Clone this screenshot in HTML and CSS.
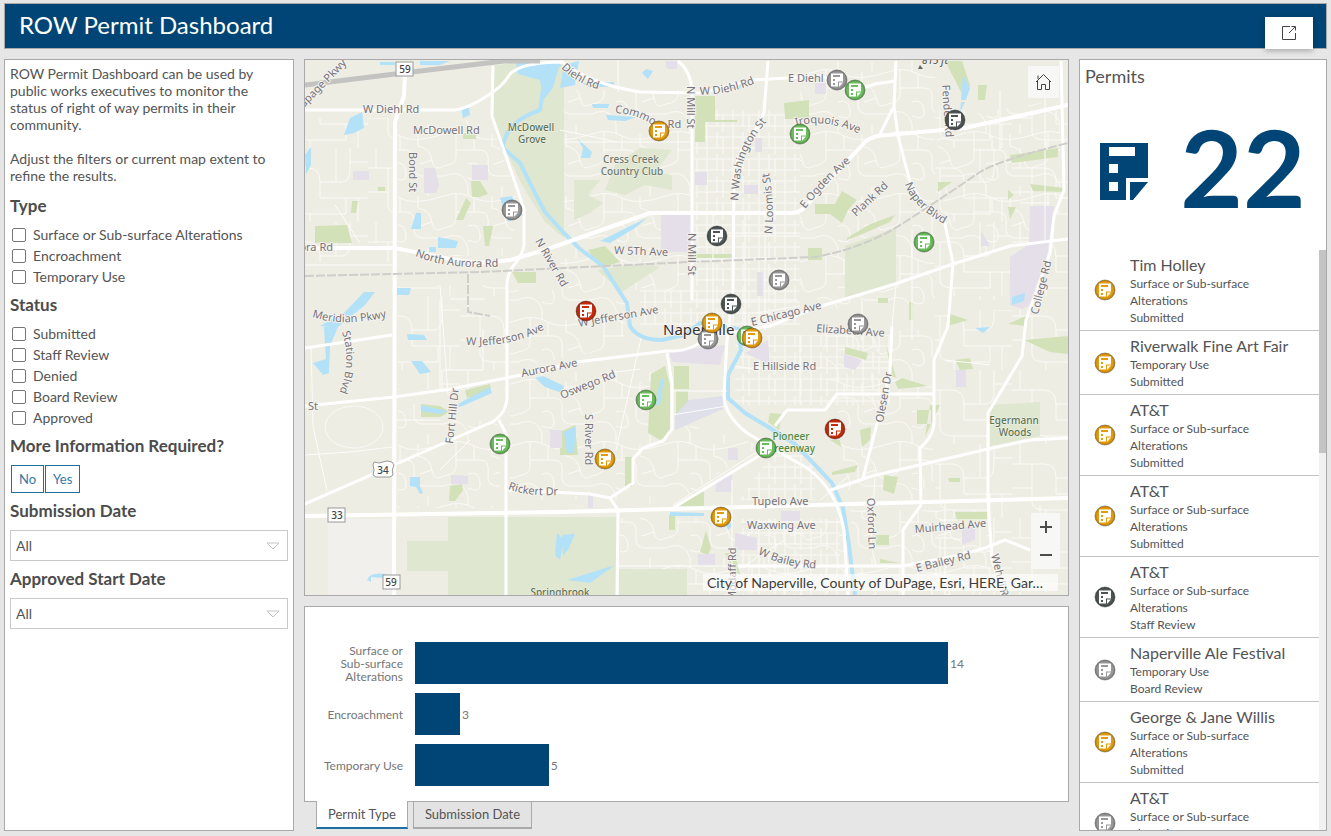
FILE: index.html
```html
<!DOCTYPE html>
<html lang="en">
<head>
<meta charset="utf-8">
<title>ROW Permit Dashboard</title>
<link rel="stylesheet" href="styles.css">
</head>
<body>
<svg class="defs" aria-hidden="true">
  <symbol id="form" viewBox="0 0 48 57"><path fill-rule="evenodd" d="M0 0H48V35H26V57H0ZM9 4V13H35V4ZM9 21V30H18V21ZM9 39V48H18V39ZM30 39H48L33 57H30Z"/></symbol>
  <symbol id="pin" viewBox="-11 -11 22 22"><circle r="10" fill="currentColor" stroke="#000" stroke-opacity=".25"/><circle r="9.500" fill="none" stroke="#000" stroke-opacity=".12" stroke-width="2"/><path fill="#fff" fill-rule="evenodd" d="M-6-6.500H6V1.500H1V6.500H-6ZM-4-5V-3H3V-5ZM-4-1V1H-2V-1ZM-4 3V5H-2V3ZM2 2.500H6L2.500 6.500H2Z"/></symbol>
</svg>

<header class="topbar">
  <h1>ROW Permit Dashboard</h1>
  <button class="open" aria-label="Open in new window"><svg width="16" height="16" viewBox="0 0 16 16"><path d="M9 1.500H1.500V14.500H14.500V8M8 8L14 2M10.500 1.500H14.500V5.500"/></svg></button>
</header>

<main class="board">
  <aside class="panel filters">
    <p>ROW Permit Dashboard can be used by public works executives to monitor the status of right of way permits in their community.</p>
    <p>Adjust the filters or current map extent to refine the results.</p>
    <fieldset><legend>Type</legend>
      <label><input type="checkbox">Surface or Sub-surface Alterations</label>
      <label><input type="checkbox">Encroachment</label>
      <label><input type="checkbox">Temporary Use</label>
    </fieldset>
    <fieldset><legend>Status</legend>
      <label><input type="checkbox">Submitted</label>
      <label><input type="checkbox">Staff Review</label>
      <label><input type="checkbox">Denied</label>
      <label><input type="checkbox">Board Review</label>
      <label><input type="checkbox">Approved</label>
    </fieldset>
    <h2>More Information Required?</h2>
    <div class="choices"><button>No</button><button>Yes</button></div>
    <h2><label for="submitted">Submission Date</label></h2>
    <div class="select"><select id="submitted"><option>All</option></select><svg width="14" height="8" viewBox="0 0 14 8"><path d="M1 1H13L7 7Z"/></svg></div>
    <h2><label for="started">Approved Start Date</label></h2>
    <div class="select"><select id="started"><option>All</option></select><svg width="14" height="8" viewBox="0 0 14 8"><path d="M1 1H13L7 7Z"/></svg></div>
  </aside>

  <section class="middle">
    <div class="panel map">
      <svg class="canvas" viewBox="305 60 763 535" preserveAspectRatio="xMidYMid slice" role="img" aria-label="Map of permits in Naperville">
        <defs>
          <pattern id="winding" width="74" height="62" patternUnits="userSpaceOnUse"><path class="lane" d="M0 10Q16 4 30 12T74 10M12 7V32Q13 40 0 42M12 26H36Q46 26 44 40T58 52H74M30 12V26M48 10V22Q60 24 62 36T74 42M0 52Q18 44 24 62M24 40Q34 36 36 48T24 54M58 0V10M24 0V10M62 36L50 40"/></pattern>
          <pattern id="blocks" width="26" height="22" patternUnits="userSpaceOnUse"><path class="lane" d="M0 5H26M0 16H26M5 0V22M15 0V16M21 5V22"/></pattern>
          <pattern id="suburb" width="92" height="74" patternUnits="userSpaceOnUse"><path class="lane" d="M0 20H32Q44 20 44 34V50H92M20 20V58Q20 66 34 66H70V50M44 34H66Q74 34 74 20V0M60 0V34M0 44H20M82 50V74M34 66V74M8 0V20M74 14H92"/></pattern>
        </defs>
        <rect x="305" y="60" width="763" height="535" fill="#eeede3"/>
        <path fill="#f1f0ed" d="M328 519H393V595H328Z"/>
        <path fill="url(#suburb)" d="M305 118H393V262H305ZM398 285H506V390H398ZM935 110H1068V300H935ZM935 310H1068V595H935Z"/>
        <path fill="url(#winding)" d="M398 120H490L522 210 505 256H398ZM564 90H690V290H560ZM510 290H625V345L510 370ZM398 400L500 425V508H398ZM510 370H666V500H510ZM672 420L760 445 680 500 640 506V470ZM620 518H735V595H620ZM800 61H935V310H840L800 290ZM737 519H845V595H737ZM820 330H933V500H850ZM850 510H990V595H860ZM935 120L1060 100V240L950 260Z"/>
        <path fill="url(#blocks)" d="M695 110H800V325H640V290H695ZM735 335H890V405H735ZM770 455H815V500H740ZM740 519H840V595H740Z"/>
        <ellipse cx="354" cy="427" rx="29" ry="21" class="lane"/>

        <g fill="#dfe7d0">
          <path d="M494 66L520 61H564V238L545 222 522 185 503 145 493 118Z"/>
          <path d="M448 517H617V595H448ZM407 541H448V571H407ZM619 569H687V595H619Z"/>
          <path d="M845 246L896 228V284L845 299ZM990 405L1040 402V436L990 446Z"/>
          <path d="M574 180H600L588 195 603 203 590 213 574 220ZM615 165L640 148 672 150 655 172 672 175V190L645 185 625 195 605 190Z"/>
          <path d="M597 270L645 263 660 267 622 292Z"/>
        </g>
        <g fill="#d3e1b9">
          <path d="M315 226L347 225 352 243H315ZM352 201H358L356 213H351ZM471 181H480L488 194 480 197H472ZM466 198L471 203 463 220H456ZM483 226H493L489 246H485ZM512 272H536V283H518ZM378 187H385V191H378ZM463 133H476V139H463Z"/>
          <path d="M695 96H715V120H737V122H705V142H695ZM784 103L809 100V119H785ZM945 61H962L970 85 965 100 955 80ZM978 85H987L985 100H978ZM938 182H952L938 192ZM1010 155L1058 148V157L1012 163ZM1030 184L1064 188V192L1033 191ZM1008 190L1014 195 1008 200ZM1008 207H1016L1010 219ZM815 204H835L842 191 857 200 848 210 842 223 830 214H815ZM847 238L870 224 895 215 890 222 860 235 847 240Z"/>
          <path d="M651 374L665 366 670 385V435L660 440 648 433ZM674 366H689V389H674ZM676 391H688V413L676 418ZM625 457H632V487H625ZM695 492H704V506H680ZM560 432L575 425 578 455H560ZM421 404L440 406 450 412 440 417H421ZM465 390L490 384 491 393 467 398ZM450 486L462 484 463 490 455 501H449ZM669 515H675V530H669Z"/>
          <path d="M700 552L706 530 711 548 708 555ZM770 413L782 414 779 430 768 422ZM845 347L868 353 866 360 845 354ZM925 437L940 405 930 405ZM895 382L902 378 928 386 898 389ZM917 410H931V424H917ZM886 344L892 377H896ZM860 430L871 427 870 440 862 447ZM832 472L858 465 855 472 832 475ZM884 475L898 477 894 494 883 490ZM955 360L970 358 973 369 960 370ZM955 512H987V521H957ZM876 535H889V545H876ZM880 559L900 563H880ZM1024 340L1068 336V354L1050 352ZM948 478H960V482H949ZM725 553H735L740 575 733 570ZM830 440H840L841 447ZM808 248H822V260H808ZM878 298H888V303H878ZM909 302H913V320H909ZM950 314L968 320 948 326ZM1008 324L1026 316V326ZM694 254H732V258H694ZM588 250L605 246 620 262 600 268Z"/>
        </g>
        <g fill="#e5dfe9">
          <path d="M424 168H435L439 185 436 193H424ZM353 171H369V180H353ZM472 165H488V180H472ZM451 475L468 476V484H451Z"/>
          <path d="M661 215H692V252H661ZM695 172H707V185H695ZM744 185H758V194H744ZM665 61H677V69H667ZM755 138H762V152H755ZM757 272H763V296H757ZM669 351L725 345 720 365 672 362ZM717 480L732 474V492H715ZM728 448H738V460H728ZM735 533L757 538V550H735ZM781 511H800V521H781ZM698 554H715V565H698ZM1030 206H1054L1048 250 1040 300 1022 309 1010 305V257L1029 244ZM981 230L990 246H981ZM956 370H966V387H956ZM844 354L862 360 855 370 844 367ZM962 527H975V540L962 545ZM550 430H562V448H550ZM588 495H593V508H588ZM768 340L770 365 745 353ZM815 83H826V94H815Z"/>
        </g>
        <path fill="#dedfe9" d="M689 400L723 396V409L675 430V415Z"/>

        <g fill="#b3e1f8">
          <path d="M350 118L362 112 364 128 354 133 344 135ZM461 108L469 108 470 115 463 118ZM380 62H395V65H380ZM420 61H450L440 65H420ZM305 155L311 147V165L306 174ZM416 213H421V229H411ZM438 237L458 241 456 248H438ZM429 247H436V252H429ZM364 292L375 292 365 305 350 317 337 328 320 326 345 312ZM397 288H411L409 295H397ZM324 327H338L330 346 329 373 323 375 313 363 326 359ZM407 334L424 335 427 340H408ZM411 361L422 361 431 372 420 374ZM421 405L447 411 465 400 490 387 492 393 465 405 440 414 421 411ZM410 477L420 477V486L423 493 420 494 416 487 410 486ZM367 580Q370 572 386 574L383 578 371 577V582Z"/>
          <path d="M516 63H560L553 88 543 100 540 80 518 74ZM564 65L579 61 575 85 560 88ZM582 83L614 82V86L590 88ZM592 104L609 104 608 108 593 108ZM606 115L637 117 625 121 608 120ZM642 73L646 69 653 71 648 79ZM577 138L592 152 590 158 581 158 583 148ZM600 241L628 227 647 218 635 228 610 243ZM500 198L512 196 516 206 523 215 508 222Z"/>
          <path d="M963 75L970 88 966 100H961ZM961 102L965 102 960 112ZM1012 297L1025 293 1024 301 1012 305ZM535 378L543 376 564 386 562 393 545 387ZM660 380L664 378 660 405H656ZM564 432L576 426 574 453H567ZM670 512L704 513V516H670ZM728 530L732 526 729 520 725 523ZM557 533L564 540 560 560 555 555ZM562 535L575 534 568 550 563 556ZM567 580L615 565 590 583ZM725 85H742L740 89H725ZM975 328L990 327 983 333Z"/>
        </g>
        <path class="river" d="M560 64L545 76 540 110Q505 122 503 148L520 163 536 195 545 212 564 233 580 249 603 266 627 303 630 326Q638 340 662 340L684 335 700 323 738 329 741 350 728 375V398L745 413 770 428 795 444 816 466 832 483 843 508 849 545 855 595"/>

        <g class="minor">
          <path d="M311 346L313 426 327 491M305 455L350 452 392 447M440 470L470 440M564 142H690M618 60V92M560 130L617 142M440 300V390M440 285L448 395M450 299H485M483 329V370H443M394 420H440M641 338L616 450M672 391H727M672 415L727 406M600 374L640 369M732 480V595M673 505L760 450M619 566H745L760 555 785 540M735 366L760 370M755 313L800 306M800 335V404M862 300V340M896 285L892 326M940 520H990M1040 505V540M912 230V340M1000 90V150M1045 75V240M945 360L990 365M1020 203H1050M875 478L871 545 876 566M820 500L850 475M945 500V595M305 265H394M335 205L360 243M692 300H798M692 233H800M713 213V330M745 213V330M765 213V330M692 260H800"/>
        </g>
        <g class="major">
          <path d="M305 110H455Q470 108 490 94Q503 86 510 74Q522 62 562 62Q590 84 640 92L700 93 753 80 822 76 850 92 875 84 895 81"/>
          <path d="M493 66L492 116 507 159 524 209V245Q522 256 514 265T507 290V398Q506 414 492 422L305 504M499 420L506 434V595"/>
          <path d="M678 61Q690 70 692 90V300M768 61L764 112Q760 125 748 140Q736 155 734 180L733 290 727 340 724 395Q724 415 747 433L793 460Q835 480 844 530L848 595"/>
          <path d="M896 61L894 106 898 136 910 182 925 208 945 224 953 263 948 326 934 360V425Q932 438 920 448L921 505 903 530V595M893 108L880 134"/>
          <path d="M1061 61L1064 190 1054 216 1050 253 1026 320 1022 356 988 413V500L992 560 1002 595"/>
          <path d="M707 337L770 326 815 308 895 284 953 264 1010 246 1068 239"/>
          <path d="M305 348L392 335M305 406L394 397 451 389 521 375 577 362 667 351Q695 352 707 335"/>
          <path d="M667 353L672 383V429L663 441 643 448 633 459V483L610 498 590 494 508 490M610 498L618 510 617 595M673 508L767 451M775 426L787 410H825L837 394H933"/>
          <path d="M828 491L872 476 988 449 1030 440 1068 438M892 326L890 373 863 478M738 566H903M903 566L960 555 985 548 1005 540 1030 550"/>
        </g>
        <path class="arterial" d="M405 70L404 96 395 122 394 595M305 248H395L440 257Q480 266 510 260L545 250 650 213H790Q800 213 806 206L852 156 865 142Q873 135 888 135L965 128 1068 105M305 516L560 512 815 505 1068 498"/>
        <path class="rail" d="M305 276L480 272 564 268 690 262 815 257Q865 248 905 222T980 172Q1000 160 1068 143M468 274V312L490 316"/>
        <path class="highway" d="M305 85L395 74 504 61H540"/>

        <defs>
          <path id="t1" d="M415 256Q452 271 506 266"/><path id="t2" d="M312 317Q345 328 390 316"/>
          <path id="t3" d="M561 68Q578 85 602 90"/><path id="t4" d="M700 95Q735 94 762 80"/>
          <path id="t5" d="M615 113Q638 114 657 128H700"/><path id="t6" d="M738 201L741 170Q748 140 772 116"/>
          <path id="t7" d="M772 234Q775 205 768 165"/><path id="t8" d="M805 209Q830 178 860 154"/>
          <path id="t9" d="M796 126Q828 117 866 137"/><path id="t10" d="M905 184Q912 208 950 227"/>
          <path id="t11" d="M342 332Q353 365 336 400"/><path id="t12" d="M466 345Q515 348 552 325"/>
          <path id="t13" d="M508 489Q530 498 570 494"/><path id="t14" d="M758 554Q785 568 826 569"/>
        </defs>
        <g class="streets">
          <text x="363" y="113">W Diehl Rd</text><text x="413" y="134">McDowell Rd</text><text x="333" y="251" text-anchor="end">Aurora Rd</text>
          <text transform="translate(298 114) rotate(-46)">Dupage Pkwy</text>
          <text transform="translate(409 152) rotate(90)">Bond St</text><text transform="translate(535 241) rotate(60)">N River Rd</text>
          <text><textPath href="#t1">North Aurora Rd</textPath></text><text><textPath href="#t2">Meridian Pkwy</textPath></text>
          <text><textPath href="#t3">Diehl Rd</textPath></text><text><textPath href="#t4">W Diehl Rd</textPath></text>
          <text><textPath href="#t5">Commons Rd</textPath></text><text><textPath href="#t6">N Washington St</textPath></text>
          <text><textPath href="#t7">N Loomis St</textPath></text><text><textPath href="#t8">E Ogden Ave</textPath></text>
          <text><textPath href="#t9">Iroquois Ave</textPath></text><text><textPath href="#t10">Naper Blvd</textPath></text>
          <text><textPath href="#t11">Station Blvd</textPath></text><text><textPath href="#t12">W Jefferson Ave</textPath></text>
          <text><textPath href="#t13">Rickert Dr</textPath></text><text><textPath href="#t14">W Bailey Rd</textPath></text>
          <text transform="translate(687 86) rotate(90)">N Mill St</text><text transform="translate(688 233) rotate(90)">N Mill St</text>
          <text transform="translate(614 254) rotate(2)">W 5Th Ave</text><text transform="translate(856 217) rotate(-43)">Plank Rd</text>
          <text x="788" y="82">E Diehl</text><text transform="translate(942 85) rotate(86)">Fender Rd</text>
          <text transform="translate(752 326) rotate(-14)">E Chicago Ave</text><text transform="translate(816 332) rotate(4)">Elizabeth Ave</text>
          <text transform="translate(1038 315) rotate(-76)">College Rd</text><text transform="translate(579 327) rotate(-10)">W Jefferson Ave</text>
          <text transform="translate(453 444) rotate(-84)">Fort Hill Dr</text><text transform="translate(522 377) rotate(-11)">Aurora Ave</text>
          <text transform="translate(562 399) rotate(-22)">Oswego Rd</text><text transform="translate(585 414) rotate(90)">S River Rd</text>
          <text x="308" y="410">St</text><text x="752" y="505">Tupelo Ave</text><text x="747" y="529">Waxwing Ave</text>
          <text x="753" y="370">E Hillside Rd</text><text transform="translate(736 601) rotate(-90)">Modaff Rd</text>
          <text transform="translate(883 423) rotate(-80)">Olesen Dr</text><text transform="translate(867 498) rotate(88)">Oxford Ln</text>
          <text transform="translate(915 533) rotate(-5)">Muirhead Ave</text><text transform="translate(917 572) rotate(-14)">E Bailey Rd</text>
          <text transform="translate(991 555) rotate(76)">Wehrli Rd</text>
        </g>
        <g class="places" text-anchor="middle">
          <text x="531" y="131">McDowell</text><text x="532" y="143">Grove</text>
          <text x="631" y="163" class="club">Cress Creek</text><text x="632" y="175" class="club">Country Club</text>
          <text x="1014" y="424">Egermann</text><text x="1015" y="436">Woods</text><text x="560" y="596">Springbrook</text>
          <text x="791" y="440" class="greenway">Pioneer</text><text x="791" y="452" class="greenway">Greenway</text>
          <text x="935" y="64" class="peak">815 ft</text>
        </g>
        <path fill="#666" d="M918 69L920 65 923 69Z"/>
        <text class="city" x="663" y="335">Naperville</text>
        <g class="shields">
          <rect x="396" y="62" width="17" height="14"/><text x="405" y="73">59</text>
          <rect x="328" y="508" width="17" height="14"/><text x="337" y="519">33</text>
          <rect x="383" y="575" width="17" height="14"/><text x="391" y="586">59</text>
          <path d="M374 462Q379 464 383 462T392 462L394 465Q391 470 393 475L390 477H376L373 475Q375 470 373 465Z"/><text x="383" y="474">34</text>
        </g>
        <g class="submitted">
          <use href="#pin" x="648" y="120" width="22" height="22"/><use href="#pin" x="594" y="448" width="22" height="22"/><use href="#pin" x="710" y="506" width="22" height="22"/>
        </g>
        <g class="review">
          <use href="#pin" x="826" y="69" width="22" height="22"/><use href="#pin" x="501" y="199" width="22" height="22"/><use href="#pin" x="768" y="269" width="22" height="22"/><use href="#pin" x="697" y="328" width="22" height="22"/><use href="#pin" x="847" y="313" width="22" height="22"/>
        </g>
        <g class="approved">
          <use href="#pin" x="844" y="79" width="22" height="22"/><use href="#pin" x="789" y="123" width="22" height="22"/><use href="#pin" x="913" y="231" width="22" height="22"/><use href="#pin" x="736" y="325" width="22" height="22"/><use href="#pin" x="635" y="389" width="22" height="22"/><use href="#pin" x="489" y="433" width="22" height="22"/><use href="#pin" x="755" y="437" width="22" height="22"/>
        </g>
        <g class="staff">
          <use href="#pin" x="944" y="109" width="22" height="22"/><use href="#pin" x="706" y="225" width="22" height="22"/><use href="#pin" x="720" y="293" width="22" height="22"/>
        </g>
        <g class="denied"><use href="#pin" x="575" y="300" width="22" height="22"/><use href="#pin" x="824" y="418" width="22" height="22"/></g>
        <g class="submitted"><use href="#pin" x="701" y="312" width="22" height="22"/><use href="#pin" x="741" y="327" width="22" height="22"/></g>
      </svg>
      <button class="home" aria-label="Default extent"><svg width="17" height="18" viewBox="0 0 17 18"><path d="M1 9L8.500 1.500 16 9M3 2.500V6M2.500 8V16.500H6.500V11.500H10.500V16.500H14.500V8"/></svg></button>
      <div class="zoom"><button aria-label="Zoom in"><svg width="12" height="12" viewBox="0 0 12 12"><path d="M0 6H12M6 0V12"/></svg></button><button aria-label="Zoom out"><svg width="12" height="12" viewBox="0 0 12 12"><path d="M0 6H12"/></svg></button></div>
      <p class="credit">City of Naperville, County of DuPage, Esri, HERE, Gar…</p>
    </div>

    <div class="charts">
      <div class="panel chart">
        <span class="name">Surface or<br>Sub-surface<br>Alterations</span><div class="track"><i style="width:82.900%"></i>14</div>
        <span class="name">Encroachment</span><div class="track"><i style="width:7%"></i>3</div>
        <span class="name">Temporary Use</span><div class="track"><i style="width:20.800%"></i>5</div>
      </div>
      <div class="tabs" role="tablist"><button role="tab" aria-selected="true">Permit Type</button><button role="tab" aria-selected="false">Submission Date</button></div>
    </div>
  </section>

  <aside class="panel permits">
    <h2>Permits</h2>
    <div class="total"><svg width="48" height="57"><use href="#form"/></svg><strong>22</strong></div>
    <div class="list">
      <ul>
        <li><svg class="submitted"><use href="#pin"/></svg><div><h3>Tim Holley</h3><p>Surface or Sub-surface Alterations</p><p>Submitted</p></div></li>
        <li><svg class="submitted"><use href="#pin"/></svg><div><h3>Riverwalk Fine Art Fair</h3><p>Temporary Use</p><p>Submitted</p></div></li>
        <li><svg class="submitted"><use href="#pin"/></svg><div><h3>AT&amp;T</h3><p>Surface or Sub-surface Alterations</p><p>Submitted</p></div></li>
        <li><svg class="submitted"><use href="#pin"/></svg><div><h3>AT&amp;T</h3><p>Surface or Sub-surface Alterations</p><p>Submitted</p></div></li>
        <li><svg class="staff"><use href="#pin"/></svg><div><h3>AT&amp;T</h3><p>Surface or Sub-surface Alterations</p><p>Staff Review</p></div></li>
        <li><svg class="review"><use href="#pin"/></svg><div><h3>Naperville Ale Festival</h3><p>Temporary Use</p><p>Board Review</p></div></li>
        <li><svg class="submitted"><use href="#pin"/></svg><div><h3>George &amp; Jane Willis</h3><p>Surface or Sub-surface Alterations</p><p>Submitted</p></div></li>
        <li><svg class="review"><use href="#pin"/></svg><div><h3>AT&amp;T</h3><p>Surface or Sub-surface Alterations</p><p>Board Review</p></div></li>
      </ul>
      <div class="scroll"><i></i></div>
    </div>
  </aside>
</main>
</body>
</html>
```
FILE: styles.css
```css
* { box-sizing: border-box; margin: 0; }
body {
  display: flex; flex-direction: column; gap: 10px;
  height: 100vh; padding: 3px 4px 5px; overflow: hidden;
  background: #e6e6e6; color: #545454;
  font: 14px/17px Lato, "Open Sans", sans-serif;
}
button, select, input { font: inherit; color: inherit; }
svg { display: block; fill: none; }
.defs { position: absolute; width: 0; height: 0; }
.topbar {
  flex: none; display: flex; justify-content: space-between; align-items: flex-end;
  height: 46px; padding: 0 13px 0 14px;
  background: #004575; border: 1px solid #a9a9a9; color: #fff;
}
.topbar h1 { align-self: flex-start; padding-top: 6px; font-size: 24px; line-height: 30px; font-weight: 400; }
.open {
  display: grid; place-items: center; width: 48px; height: 32px; margin-bottom: -1px;
  background: #fff; border: 0; box-shadow: 0 2px 5px rgba(0, 0, 0, .25);
}
.open path, .home path { stroke: #444; }
.board { flex: 1; min-height: 0; display: grid; grid-template-columns: 290fr 765fr 248fr; gap: 10px; }
.panel { background: #fff; border: 1px solid #a9a9a9; }

.filters { padding: 5px; }
.filters p + p { margin-top: 17px; }
.filters h2, .filters legend { padding: 0; font-size: 17px; line-height: 24px; font-weight: 700; color: #4c4c4c; }
.filters fieldset { padding: 0; border: 0; margin-top: 6px; }
.filters p + fieldset { margin-top: 10px; }
.filters legend { margin-bottom: 6px; }
.filters fieldset label { display: flex; align-items: center; gap: 7px; height: 21px; padding-left: 2px; }
.filters input { appearance: none; width: 14px; height: 14px; margin: 0; border: 1px solid #767676; border-radius: 2px; background: #fff; }
.filters h2 { margin: 6px 0 7px; }
.choices { display: flex; gap: 1px; padding-left: 1px; }
.choices button { height: 28px; padding: 0 7px; background: #fff; border: 1px solid #1f6f9f; color: #3a77a6; font-size: 13px; }
.select { position: relative; }
.select select { appearance: none; display: block; width: 100%; height: 31px; padding: 0 5px; background: #fff; border: 1px solid #c9c9c9; border-radius: 0; }
.select svg { position: absolute; right: 8px; top: 12px; pointer-events: none; }
.select path { stroke: #c4c4c4; }

.middle { display: flex; flex-direction: column; gap: 10px; min-width: 0; min-height: 0; }
.map { position: relative; flex: 1; min-height: 0; overflow: hidden; }
.canvas { width: 100%; height: 100%; }
.lane, .minor, .major, .arterial, .rail, .highway, .river { fill: none; }
.lane { stroke: #faf9f6; }
.minor { stroke: #fcfcfa; stroke-width: 1; }
.major { stroke: #fff; stroke-width: 3; stroke-linejoin: round; }
.arterial { stroke: #fff; stroke-width: 4; stroke-linejoin: round; }
.rail { stroke: #cfcecb; stroke-width: 2; stroke-dasharray: 9 2; }
.highway { stroke: #c3c3c1; stroke-width: 5; }
.river { stroke: #b3e1f8; stroke-width: 4; stroke-linejoin: round; }
.canvas text { font-family: "Noto Sans", sans-serif; font-size: 11px; paint-order: stroke; stroke: #f4f3ee; stroke-width: 2px; stroke-linejoin: round; }
.canvas .streets text { fill: #77747b; }
.canvas .places text { font-size: 10px; font-weight: 500; fill: #5d7453; stroke-width: 1px; }
.canvas .places .club { fill: #6d7a6b; }
.canvas .places .greenway { fill: #4d8a3e; }
.canvas .places .peak { fill: #666052; font-style: italic; }
.canvas .city { font-size: 15px; fill: #333; }
.shields rect, .shields path { fill: #fff; stroke: #999; stroke-width: 1; }
.canvas .shields text { text-anchor: middle; fill: #444; font-size: 10px; font-weight: 500; stroke: none; }
.submitted { color: #e39b0b; }
.approved { color: #69be5b; }
.staff { color: #4e5654; }
.review { color: #989898; }
.denied { color: #c62b0b; }
.home, .zoom { position: absolute; display: grid; background: #f7f7f5; border: 0; }
.home { top: 6px; right: 9px; width: 31px; height: 32px; padding: 0; place-items: center; }
.zoom { right: 8px; bottom: 26px; width: 29px; }
.zoom button { display: grid; place-items: center; height: 28px; padding: 0; background: none; border: 0; }
.zoom path { stroke: #4c4c4c; stroke-width: 2; }
.credit { position: absolute; right: 10px; bottom: 4px; padding: 0 15px 0 4px; background: rgba(255, 255, 255, .6); font-size: 14px; color: #3c3c3c; }

.chart { display: grid; grid-template-columns: 98px 1fr; gap: 9px 12px; height: 196px; padding: 35px 10px 15px 0; align-items: center; grid-auto-rows: 42px; font-size: 12px; line-height: 13px; color: #767676; }
.name { text-align: right; }
.track { display: flex; align-items: center; gap: 2px; }
.track i { height: 42px; background: #004575; }
.tabs { display: flex; align-items: flex-start; gap: 5px; padding-left: 12px; height: 29px; }
.tabs button { height: 27px; padding: 0 11px; border: 1px solid #a9a9a9; border-width: 0 1px 2px; background: #e3e3e3; font-size: 13px; }
.tabs button[aria-selected="true"] { position: relative; height: 28px; margin-top: -1px; background: #fff; border-bottom-color: #1f6fa5; }

.permits { display: flex; flex-direction: column; min-height: 0; overflow: hidden; }
.permits h2 { padding: 4px 5px; font-size: 18px; line-height: 24px; font-weight: 400; }
.total { flex: none; display: flex; align-items: center; justify-content: center; gap: 32px; height: 158px; color: #004575; }
.total svg { fill: currentColor; }
.total strong { padding-bottom: 10px; font-size: 108px; line-height: 108px; font-weight: 700; }
.list { flex: 1; min-height: 0; display: flex; }
.list ul { flex: 1; padding: 0; list-style: none; overflow: hidden; }
.list li { display: grid; grid-template-columns: 22px 1fr; gap: 14px; align-items: center; padding: 4px 50px 4px 14px; border-bottom: 1px solid #c4c4c4; }
.list li svg { width: 22px; height: 22px; }
.list h3 { font-size: 16px; line-height: 21px; font-weight: 400; white-space: nowrap; }
.list p { font-size: 12px; }
.scroll { width: 7px; background: #f1f1f1; }
.scroll i { display: block; height: 35%; background: #c4c4c4; }
```
